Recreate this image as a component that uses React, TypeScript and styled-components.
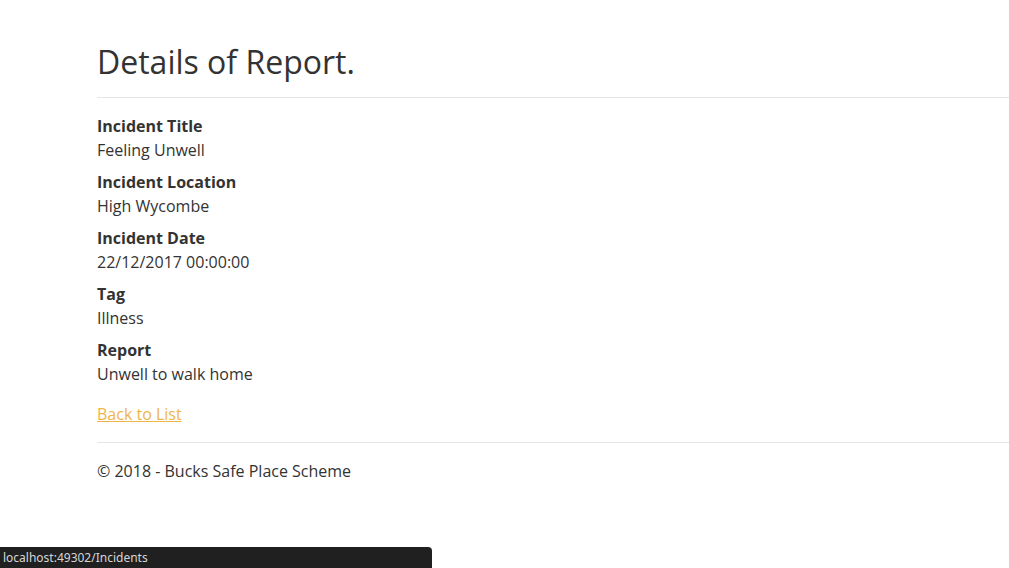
import React from "react";
import styled, { createGlobalStyle } from "styled-components";

const Global = createGlobalStyle`
  html, body { margin: 0; padding: 0; background: #fff; }
  body {
    font-family: "Open Sans", "Noto Sans", sans-serif;
    font-size: 16px;
    line-height: 24px;
    color: #333;
    overflow: hidden;
  }
`;

const Page = styled.div`
  width: 1009px;
  height: 568px;
  position: relative;
  overflow: hidden;
`;

const Container = styled.div`
  padding: 43px 0 0 97px;
`;

const Title = styled.h2`
  margin: 0 0 16px 0;
  font-size: 32px;
  line-height: 38px;
  font-weight: 400;
  color: #333;
`;

const Rule = styled.hr`
  margin: 0 0 16px 0;
  border: 0;
  border-top: 1px solid #e5e5e5;
  height: 0;
`;

const List = styled.dl`
  margin: 0 0 16px 0;
`;

const Term = styled.dt`
  font-weight: 700;
`;

const Desc = styled.dd`
  margin: 0 0 8px 0;
`;

const LinkLine = styled.p`
  margin: 0 0 16px 0;
`;

const Link = styled.a`
  color: #f0b449;
  text-decoration: underline;
`;

const Footer = styled.footer`
  margin: 0;
`;

const StatusBar = styled.div`
  position: absolute;
  left: 0;
  bottom: 0;
  width: 432px;
  height: 21px;
  background: #202020;
  border-top-right-radius: 4px;
  color: #d6d6d6;
  font-family: "Noto Sans", "Open Sans", sans-serif;
  font-size: 12px;
  line-height: 21px;
  padding-left: 3px;
  box-sizing: border-box;
`;

const items: [string, string][] = [
  ["Incident Title", "Feeling Unwell"],
  ["Incident Location", "High Wycombe"],
  ["Incident Date", "22/12/2017 00:00:00"],
  ["Tag", "Illness"],
  ["Report", "Unwell to walk home"],
];

export default function App() {
  return (
    <Page>
      <Global />
      <Container>
        <Title>Details of Report.</Title>
        <Rule />
        <List>
          {items.map(([k, v]) => (
            <React.Fragment key={k}>
              <Term>{k}</Term>
              <Desc>{v}</Desc>
            </React.Fragment>
          ))}
        </List>
        <LinkLine>
          <Link href="#">Back to List</Link>
        </LinkLine>
        <Rule />
        <Footer>© 2018 - Bucks Safe Place Scheme</Footer>
      </Container>
      <StatusBar>localhost:49302/Incidents</StatusBar>
    </Page>
  );
}
